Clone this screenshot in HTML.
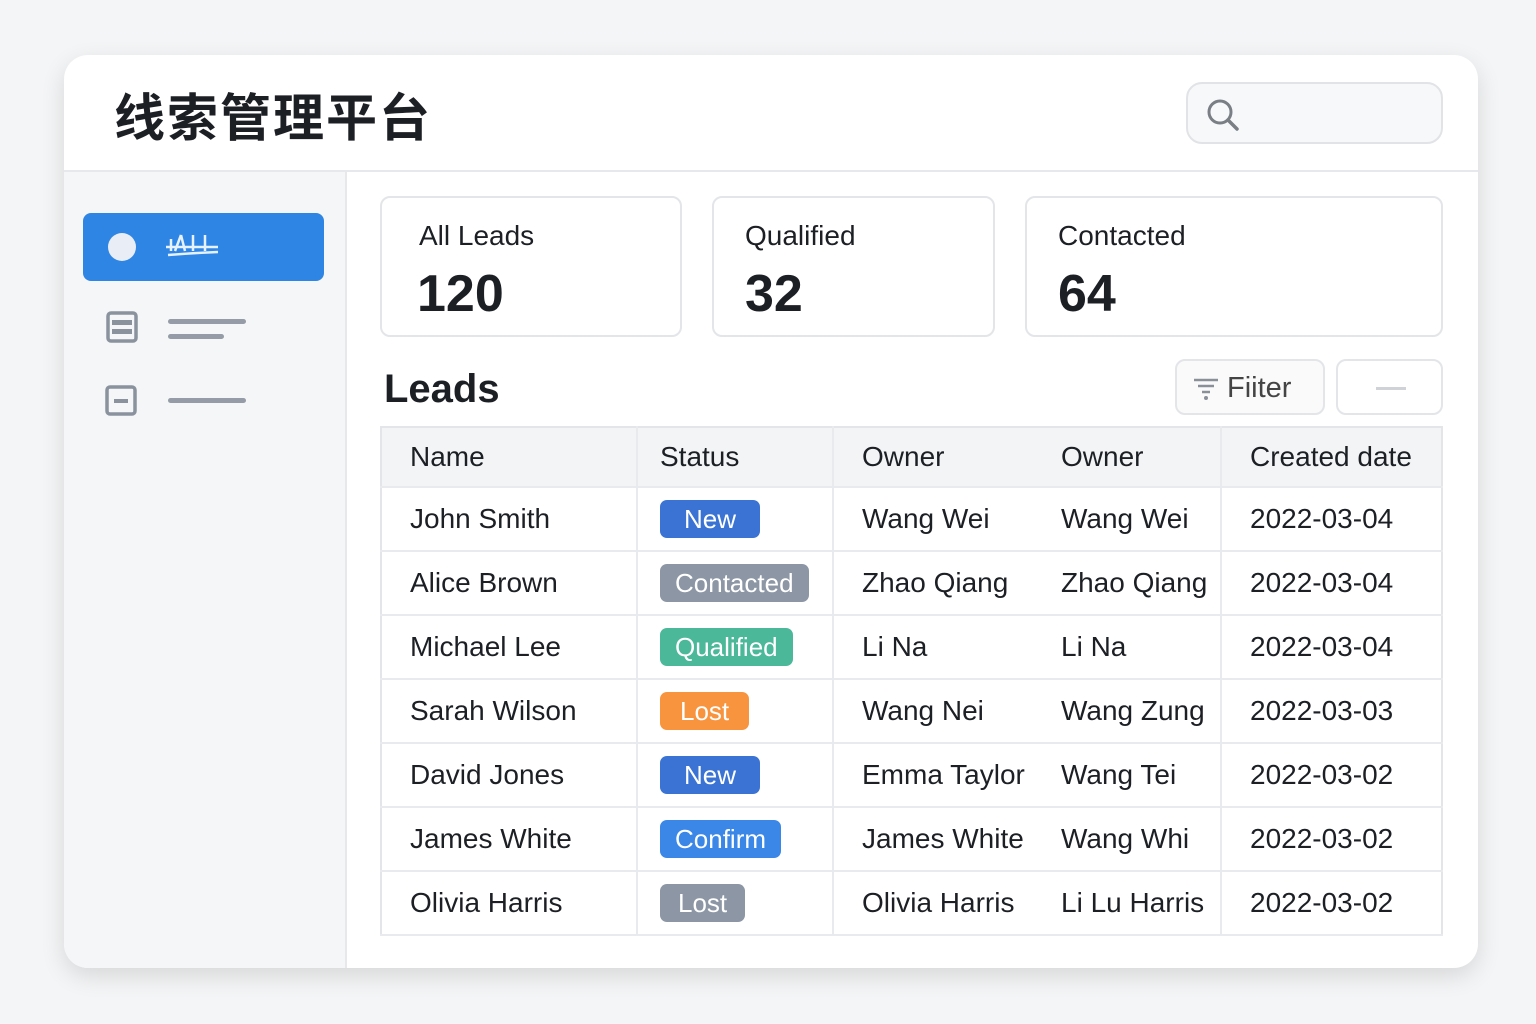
<!DOCTYPE html>
<html><head><meta charset="utf-8"><style>
*{box-sizing:border-box;margin:0;padding:0}
body{width:1536px;height:1024px;background:#f4f5f6;font-family:"Liberation Sans","Noto Sans CJK SC",sans-serif;color:#1c1f24;position:relative;overflow:hidden}
.card{position:absolute;left:64px;top:55px;width:1414px;height:913px;background:#fff;border-radius:24px;box-shadow:0 8px 24px rgba(0,0,0,.12);overflow:hidden}
.hdr{position:absolute;left:0;top:0;right:0;height:117px;border-bottom:2px solid #e6e8eb}
.title{position:absolute;left:50px;top:22px;font-size:51px;font-weight:bold;letter-spacing:2px;font-family:"Noto Sans CJK SC",sans-serif}
.search{position:absolute;left:1122px;top:27px;width:257px;height:62px;border:2px solid #e1e3e6;border-radius:16px;background:#f7f8f9}
.side{position:absolute;left:0;top:117px;width:283px;bottom:0;background:#f5f6f7;border-right:2px solid #e6e8eb}
.act{position:absolute;left:19px;top:41px;width:241px;height:68px;background:#2f85e4;border-radius:8px}
.stat{position:absolute;top:141px;height:141px;border:2px solid #e3e5e8;border-radius:10px}
.stat .l{position:absolute;left:37px;top:22px;font-size:28px}
.stat .n{position:absolute;left:35px;top:66px;font-size:52px;font-weight:bold}
.leads{position:absolute;left:320px;top:312px;font-size:40px;font-weight:bold}
.btn{position:absolute;top:304px;height:56px;border:2px solid #e3e5e8;border-radius:10px;background:#fafafa}
table{position:absolute;left:316px;top:371px;width:1063px;border-collapse:collapse;font-size:28px;border:2px solid #e3e5e8}
td,th{height:64px;padding-left:28px;text-align:left;font-weight:normal;border-bottom:2px solid #e8eaed}
th{height:60px;background:#f3f4f6;font-weight:500}
.b{display:inline-block;color:#fff;border-radius:7px;padding:0 15px;height:38px;line-height:38px;font-size:26px}
.vl{border-left:2px solid #e8eaed}
</style></head><body>
<div class="card">
<div class="hdr"><div class="title">线索管理平台</div>
<div class="search"><svg width="40" height="40" style="position:absolute;left:16px;top:12px" viewBox="0 0 40 40"><circle cx="16" cy="16" r="11" fill="none" stroke="#7a7f86" stroke-width="3"/><line x1="24" y1="24" x2="33" y2="33" stroke="#7a7f86" stroke-width="3.5" stroke-linecap="round"/></svg></div></div>
<div class="side">
<div class="act"><div style="position:absolute;left:25px;top:20px;width:28px;height:28px;border-radius:50%;background:#e9eef6"></div>
<svg width="60" height="30" style="position:absolute;left:80px;top:16px" viewBox="0 0 60 30"><path d="M3 18H55M8 10v12M18 6l-6 16M18 6l4 16M30 6v16M42 6v16M5 26Q30 24 55 23" stroke="#e6f2ff" stroke-width="2.5" fill="none"/></svg></div>
<svg width="40" height="40" style="position:absolute;left:40px;top:136px" viewBox="0 0 40 40"><rect x="4" y="5" width="28" height="28" rx="3" fill="none" stroke="#8a929e" stroke-width="3.5"/><rect x="8" y="12" width="20" height="5" fill="#8a929e"/><rect x="8" y="21" width="20" height="5" fill="#8a929e"/></svg>
<div style="position:absolute;left:104px;top:147px;width:78px;height:5px;border-radius:3px;background:#959ca7"></div>
<div style="position:absolute;left:104px;top:162px;width:56px;height:5px;border-radius:3px;background:#959ca7"></div>
<svg width="40" height="40" style="position:absolute;left:40px;top:212px" viewBox="0 0 40 40"><rect x="3" y="3" width="28" height="27" rx="3" fill="none" stroke="#8a929e" stroke-width="3.5"/><rect x="10" y="15" width="14" height="4" fill="#8a929e"/></svg>
<div style="position:absolute;left:104px;top:226px;width:78px;height:5px;border-radius:3px;background:#959ca7"></div>
</div>
<div class="stat" style="left:316px;width:302px"><div class="l">All Leads</div><div class="n">120</div></div>
<div class="stat" style="left:648px;width:283px"><div class="l" style="left:31px">Qualified</div><div class="n" style="left:31px">32</div></div>
<div class="stat" style="left:961px;width:418px"><div class="l" style="left:31px">Contacted</div><div class="n" style="left:31px">64</div></div>
<div class="leads">Leads</div>
<div class="btn" style="left:1111px;width:150px"><svg width="30" height="30" style="position:absolute;left:14px;top:13px" viewBox="0 0 30 30"><path d="M3 6h24M7 12h16M11 18h8" stroke="#8a9099" stroke-width="2.5"/><circle cx="15" cy="24" r="2" fill="#8a9099"/></svg><span style="position:absolute;left:50px;top:11px;font-size:29px;color:#444">Fiiter</span></div>
<div class="btn" style="left:1272px;width:107px;background:#fff"><div style="position:absolute;left:38px;top:26px;width:30px;height:3px;background:#cfd2d6"></div></div>
<table>
<tr><th style="width:256px">Name</th><th class="vl" style="width:196px;padding-left:22px">Status</th><th class="vl" style="width:200px">Owner</th><th style="width:188px">Owner</th><th class="vl">Created date</th></tr>
<tr><td>John Smith</td><td class="vl" style="padding-left:22px"><span class="b" style="background:#3a73d3;padding:0 24px">New</span></td><td class="vl">Wang Wei</td><td>Wang Wei</td><td class="vl">2022-03-04</td></tr>
<tr><td>Alice Brown</td><td class="vl" style="padding-left:22px"><span class="b" style="background:#8c96a4">Contacted</span></td><td class="vl">Zhao Qiang</td><td>Zhao Qiang</td><td class="vl">2022-03-04</td></tr>
<tr><td>Michael Lee</td><td class="vl" style="padding-left:22px"><span class="b" style="background:#4bb899">Qualified</span></td><td class="vl">Li Na</td><td>Li Na</td><td class="vl">2022-03-04</td></tr>
<tr><td>Sarah Wilson</td><td class="vl" style="padding-left:22px"><span class="b" style="background:#f8943e;padding:0 20px">Lost</span></td><td class="vl">Wang Nei</td><td>Wang Zung</td><td class="vl">2022-03-03</td></tr>
<tr><td>David Jones</td><td class="vl" style="padding-left:22px"><span class="b" style="background:#3a73d3;padding:0 24px">New</span></td><td class="vl">Emma Taylor</td><td>Wang Tei</td><td class="vl">2022-03-02</td></tr>
<tr><td>James White</td><td class="vl" style="padding-left:22px"><span class="b" style="background:#3a87e8">Confirm</span></td><td class="vl">James White</td><td>Wang Whi</td><td class="vl">2022-03-02</td></tr>
<tr><td>Olivia Harris</td><td class="vl" style="padding-left:22px"><span class="b" style="background:#8c96a4;padding:0 18px">Lost</span></td><td class="vl">Olivia Harris</td><td>Li Lu Harris</td><td class="vl">2022-03-02</td></tr>
</table>
</div>
</body></html>
